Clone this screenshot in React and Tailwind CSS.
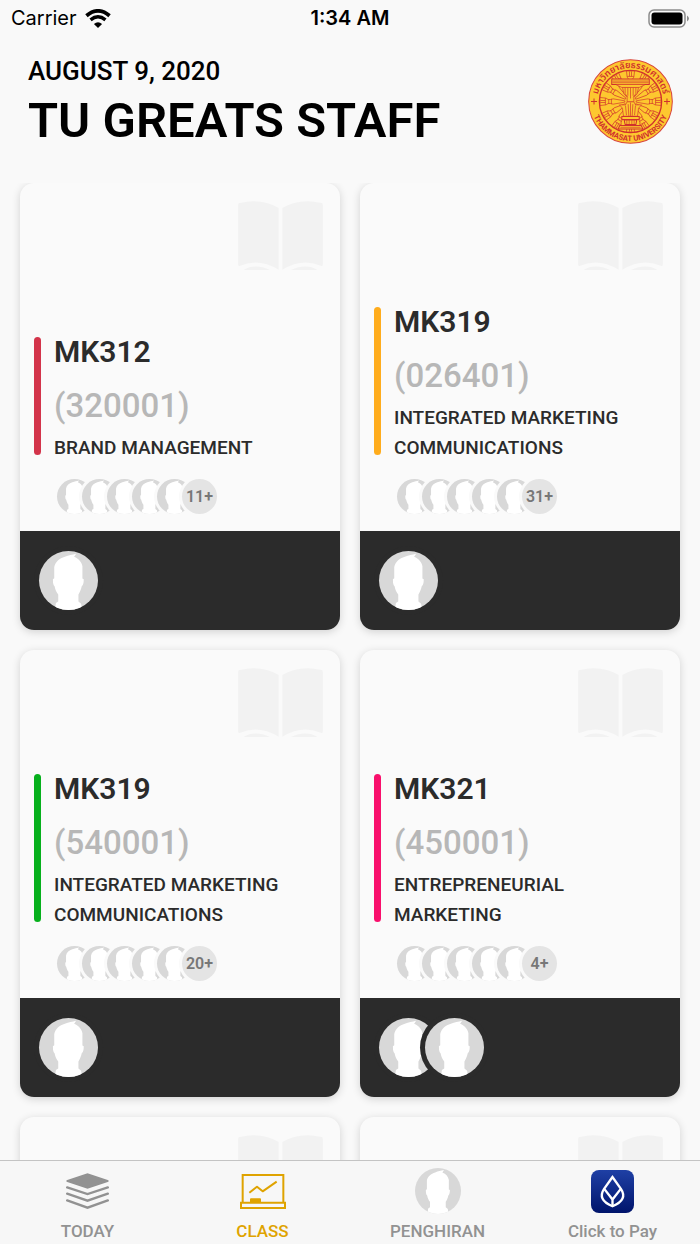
import React, { useState } from 'react';

const courses = [
  { id: 1, code: 'MK312', section: '320001', name: 'BRAND MANAGEMENT', bar: 'bg-[#d3344a]', more: 11, staff: 1 },
  { id: 2, code: 'MK319', section: '026401', name: 'INTEGRATED MARKETING COMMUNICATIONS', bar: 'bg-[#ffac1c]', more: 31, staff: 1 },
  { id: 3, code: 'MK319', section: '540001', name: 'INTEGRATED MARKETING COMMUNICATIONS', bar: 'bg-[#06b01c]', more: 20, staff: 1 },
  { id: 4, code: 'MK321', section: '450001', name: 'ENTREPRENEURIAL MARKETING', bar: 'bg-[#f90f6c]', more: 4, staff: 2 },
];

function Avatar({ className }) {
  return (
    <svg viewBox="0 0 178 178" className={`shrink-0 rounded-full bg-[#d8d8d8] ${className}`} aria-hidden="true">
      <path
        fill="#fff"
        d="M46 82V48C49 32 62 22 78 17C90 12 100 11 112 8L106 17C120 23 129 33 131 46V83L135 85C135 97 133 103 129 106C127 117 122 125 119 131V152L127 159L130 178H48L51 157L58 152V131C53 125 49 116 47 106C43 103 42 97 42 85Z"
      />
    </svg>
  );
}

function WifiIcon() {
  return (
    <svg viewBox="0 0 76 56" className="w-[26px] h-[19px]" fill="none" stroke="#000" aria-hidden="true">
      <path d="M4 20Q38 -9 72 20" strokeWidth="11" />
      <path d="M16 32Q38 14 60 32" strokeWidth="10" />
      <path d="M26 44Q38 34 50 44L38 56Z" fill="#000" stroke="none" />
    </svg>
  );
}

function BatteryIcon() {
  return (
    <svg viewBox="0 0 41 19" className="w-[41px] h-[19px]" aria-hidden="true">
      <rect x="1" y="1" width="36" height="17" rx="5" fill="none" stroke="#8c8c8c" strokeWidth="1.5" />
      <rect x="3.5" y="3.5" width="31" height="12" rx="3" />
      <path d="M39 6.500Q41 8 41 9.500T39 12.500Z" fill="#8c8c8c" />
    </svg>
  );
}

function Seal() {
  return (
    <svg viewBox="0 0 254 254" className="w-[85px] h-[85px] shrink-0" role="img" aria-label="Thammasat University">
      <defs>
        <path id="seal-top" d="M27 127A100 100 0 0 1 227 127" />
        <path id="seal-bottom" d="M9 127A118 118 0 0 0 245 127" />
      </defs>
      <circle cx="127" cy="127" r="125" fill="#fdc82f" stroke="#d8433c" strokeWidth="3" />
      <circle cx="127" cy="127" r="93" fill="none" stroke="#d0312d" strokeWidth="4" />
      <g stroke="#d0312d" strokeWidth="2" fill="#fdc82f">
        {[0, 30, 60, 90, 120, 150, 180, 210, 240, 270, 300, 330].map((deg) => (
          <g key={deg} transform={`rotate(${deg} 127 127)`}>
            <path d="M125 110L119 75L121 68V60L117 54L115 36H139L137 54L133 60V68L135 75L129 110Z" />
            <path d="M120 62H134M119 70H135M117 52H137M124 52V37M130 52V37" />
          </g>
        ))}
        <path d="M103 84H151L147 103L137 115V128H117V115L107 103Z" />
        <path d="M111 84V104L119 114M119 84V110M127 84V118M135 84V110M143 84V104L135 114" fill="none" />
        <path d="M71 60H183V76H71Z" strokeWidth="3" />
        <path d="M73 66H181M73 71H181M84 77L101 85H153L170 77" />
        <path d="M117 128H137L142 137H160L151 147L148 171H106L103 147L94 137H112Z" />
        <path d="M112 139L115 168M120 135L122 170M127 130V170M134 135L132 170M142 139L139 168" fill="none" />
        <path d="M101 172H153V181H101ZM108 182H146L143 196H111ZM95 199H159L164 209H90Z" strokeWidth="3" />
        <path d="M116 183V196M123 183V196M131 183V196M138 183V196M97 204H157" />
      </g>
      <path d="M9 127H27M18 118V136M227 127H245M236 118V136" stroke="#d0312d" strokeWidth="3" />
      <g fill="#d0312d" textAnchor="middle">
        <text className="font-['Noto_Sans_Thai','Noto_Sans',sans-serif] text-[27px] font-semibold">
          <textPath href="#seal-top" startOffset="50%">มหาวิทยาลัยธรรมศาสตร์</textPath>
        </text>
        <text className="font-[Roboto,sans-serif] text-[23px] font-bold">
          <textPath href="#seal-bottom" startOffset="50%">THAMMASAT UNIVERSITY</textPath>
        </text>
      </g>
    </svg>
  );
}

function BookIcon() {
  return (
    <svg viewBox="0 0 255 208" className="w-[85px] h-[69px] self-end" fill="#f2f2f2" aria-hidden="true">
      <path d="M4 6Q70 -10 122 21V207Q60 170 4 196Q0 197 0 192V11Q0 7 4 6Z" />
      <path d="M251 6Q185 -10 133 21V207Q195 170 251 196Q255 197 255 192V11Q255 7 251 6Z" />
      <path d="M16 208Q50 187 96 208ZM159 208Q205 187 239 208Z" />
    </svg>
  );
}

function TodayIcon() {
  return (
    <svg viewBox="0 0 128 108" className="w-[43px] h-[36px]" aria-hidden="true">
      <path d="M64 1L127 22V26L64 47L1 26V22Z" fill="#929292" />
      <path
        d="M3 43L64 63L125 43M3 62L64 83L125 62M3 82L64 104L125 82"
        fill="none"
        stroke="#929292"
        strokeWidth="7"
        strokeLinecap="round"
      />
    </svg>
  );
}

function ClassIcon() {
  return (
    <svg viewBox="0 0 138 105" className="w-[46px] h-[35px]" fill="none" stroke="#dfa300" strokeWidth="6" aria-hidden="true">
      <path d="M8 86V3H130V86M3 86H135V102H3Z" />
      <path d="M28 56L51 38L68 52L110 23" strokeLinejoin="round" />
      <path d="M30 86V76Q30 73 33 73H60Q63 73 63 76V86Z" fill="#dfa300" stroke="none" />
    </svg>
  );
}

function PayIcon() {
  return (
    <svg viewBox="0 0 128 128" className="w-[43px] h-[43px]" aria-hidden="true">
      <defs>
        <linearGradient id="pay" x1="0" y1="0" x2="0" y2="1">
          <stop offset="0" stopColor="#1f40a5" />
          <stop offset="1" stopColor="#00146b" />
        </linearGradient>
      </defs>
      <rect width="128" height="128" rx="24" fill="url(#pay)" />
      <g fill="none" stroke="#fff" strokeWidth="7">
        <path d="M64 21L39 56C25 77 32 95 64 108C96 95 103 77 89 56Z" />
        <path d="M40 57L64 88L88 57M64 86V108" />
      </g>
    </svg>
  );
}

const tabs = [
  { id: 'today', label: 'TODAY', icon: <TodayIcon /> },
  { id: 'class', label: 'CLASS', icon: <ClassIcon /> },
  { id: 'profile', label: 'PENGHIRAN', icon: <Avatar className="w-[46px] h-[46px]" /> },
  { id: 'pay', label: 'Click to Pay', icon: <PayIcon /> },
];

function Card({ children, footer }) {
  return (
    <article className="flex flex-col rounded-[14px] overflow-hidden bg-[#fafafa] shadow-[0_2px_8px_rgba(0,0,0,0.16)]">
      <div className="flex flex-col flex-1 min-h-[348px] pt-[18px] pb-[17px] pr-[17px] pl-[14px]">
        <BookIcon />
        {children}
      </div>
      <div className="flex items-center h-[99px] px-[19px] -space-x-[13px] bg-[#2b2b2b]">{footer}</div>
    </article>
  );
}

function CourseCard({ course }) {
  const footer = Array.from({ length: course.staff }, (_, n) => (
    <Avatar key={n} className="w-[59px] h-[59px] ring-5 ring-[#2b2b2b]" />
  ));

  return (
    <Card footer={footer}>
      <div className="flex gap-[13px] mt-auto">
        <span className={`w-[7px] shrink-0 rounded-full mt-3 mb-2 ${course.bar}`} />
        <div className="text-[#2b2b2b]">
          <h2 className="text-[30px] leading-[54px] font-semibold">{course.code}</h2>
          <p className="text-[33px] leading-[54px] font-medium text-[#b7b7b7]">({course.section})</p>
          <p className="text-[19px] leading-[30px] font-medium">{course.name}</p>
        </div>
      </div>
      <div className="flex -space-x-[10px] mt-4 ml-[23px]">
        {[0, 1, 2, 3, 4].map((n) => (
          <Avatar key={n} className="w-[35px] h-[35px] ring-3 ring-[#fafafa]" />
        ))}
        <span className="flex items-center justify-center w-[35px] h-[35px] rounded-full bg-[#e4e4e4] ring-3 ring-[#fafafa] text-[16px] font-semibold text-[#777]">
          {course.more}+
        </span>
      </div>
    </Card>
  );
}

export default function App() {
  const [tab, setTab] = useState('class');

  return (
    <div className="flex flex-col h-dvh bg-[#f9f9f9] font-[Roboto,sans-serif] text-black">
      <div className="grid grid-cols-3 items-center h-9 px-[11px] font-[Inter,sans-serif] text-[20px] leading-9">
        <div className="flex items-center gap-2">
          <span>Carrier</span>
          <WifiIcon />
        </div>
        <span className="text-center font-semibold">1:34 AM</span>
        <div className="flex justify-end">
          <BatteryIcon />
        </div>
      </div>

      <header className="flex items-start justify-between pl-7 pr-[27px] pt-[23px] pb-[39px]">
        <div>
          <p className="text-[26px] leading-6 font-medium">AUGUST 9, 2020</p>
          <h1 className="text-[49px] leading-[60px] mt-2 -mb-[7px] font-semibold">TU GREATS STAFF</h1>
        </div>
        <Seal />
      </header>

      <main className="flex-1 min-h-0 overflow-y-auto [scrollbar-width:none]">
        <div className="grid grid-cols-2 gap-5 px-5 pb-5">
          {courses.map((course) => (
            <CourseCard key={course.id} course={course} />
          ))}
          <Card />
          <Card />
        </div>
      </main>

      <nav className="grid grid-cols-4 shrink-0 border-t border-[#c4c4c4] bg-[#f7f7f7] pt-[7px]">
        {tabs.map((t) => (
          <button
            key={t.id}
            type="button"
            onClick={() => setTab(t.id)}
            className={`flex flex-col items-center gap-[5px] ${tab === t.id ? 'text-[#dfa300]' : 'text-[#929292]'}`}
          >
            <span className="flex items-center justify-center h-[46px]">{t.icon}</span>
            <span className="text-[17px] leading-[25px] font-medium">{t.label}</span>
          </button>
        ))}
      </nav>
    </div>
  );
}
